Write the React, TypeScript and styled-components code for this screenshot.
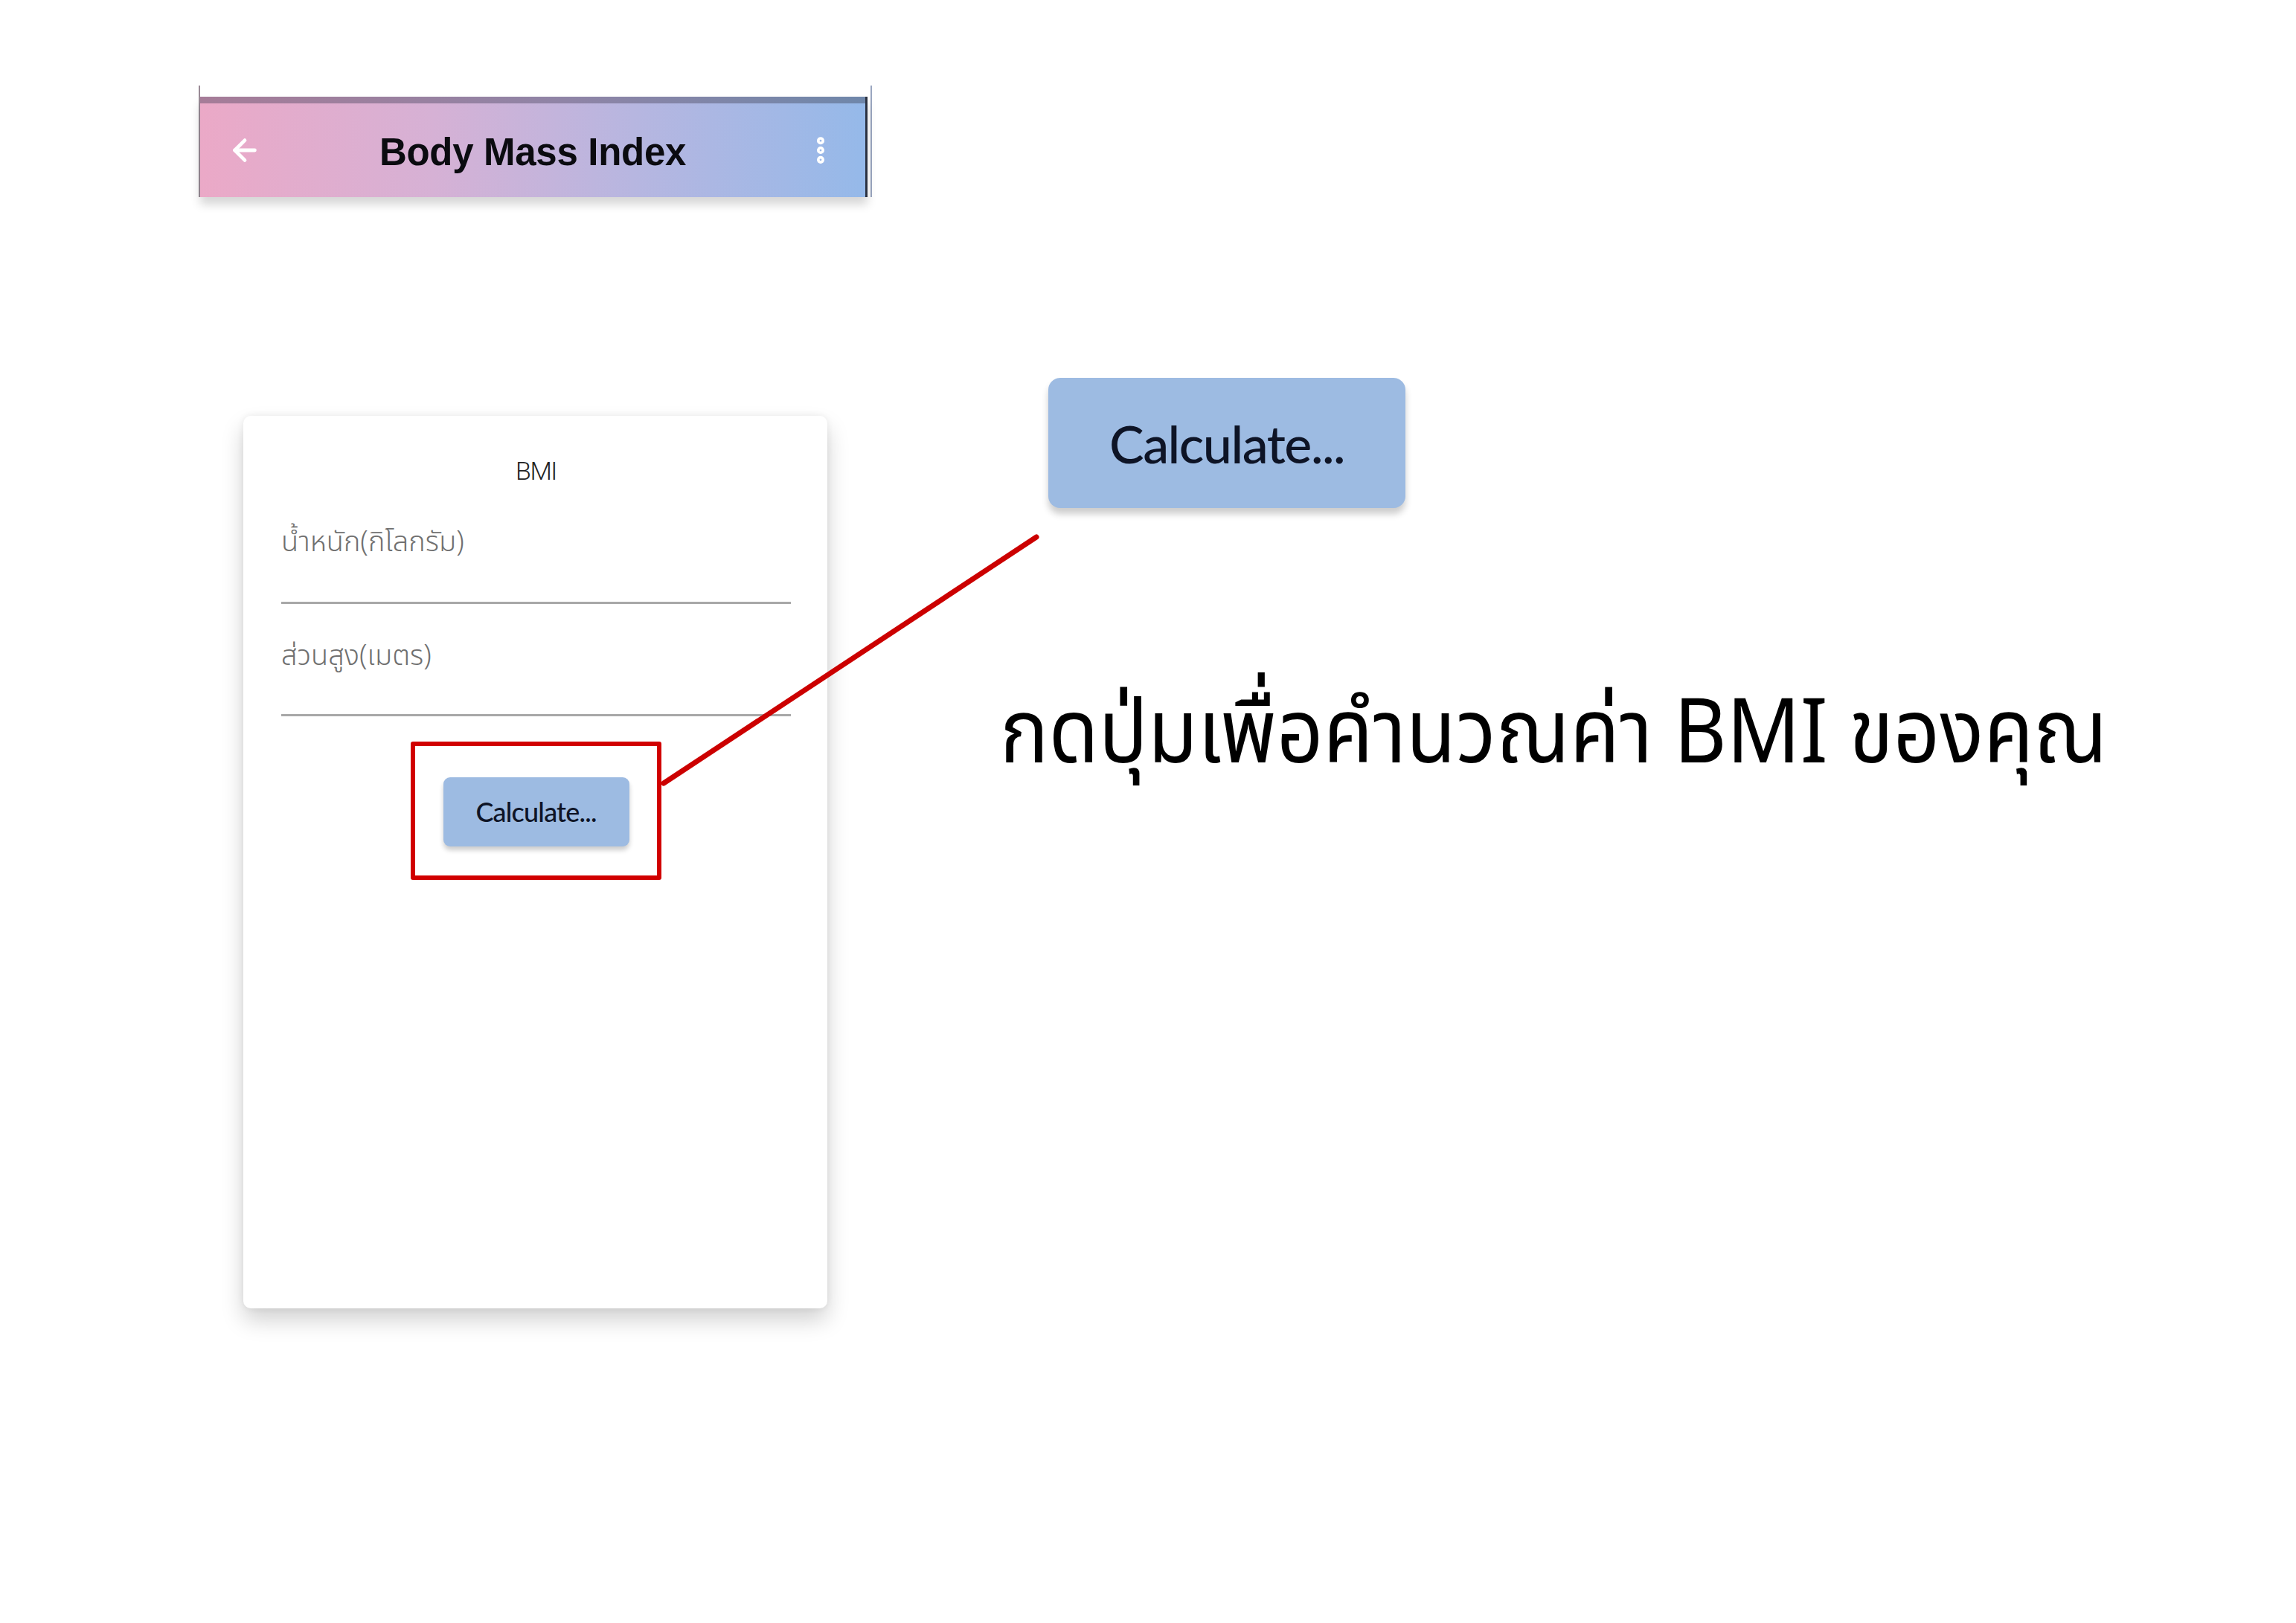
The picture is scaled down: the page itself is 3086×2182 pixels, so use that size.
import React from "react";
import styled, { createGlobalStyle } from "styled-components";
import { ArrowLeft, EllipsisVertical } from "lucide-react";

const Global = createGlobalStyle`
  html, body { margin: 0; padding: 0; background: #ffffff; }
  body { font-family: "Liberation Sans", "Noto Sans", sans-serif; }
`;

const Page = styled.div`
  position: relative;
  width: 3086px;
  height: 2182px;
  box-sizing: border-box;
  padding: 115px 0 0 267px;
  display: flex;
  gap: 172px;
  background: #ffffff;
`;

const LeftColumn = styled.div`
  display: flex;
  flex-direction: column;
  width: 905px;
`;

const PhoneFrame = styled.div`
  box-sizing: border-box;
  width: 905px;
  padding-top: 15px;
  border-left: 2px solid #9a8a96;
  border-right: 2px solid #9aa6c0;
  display: flex;
`;

const AppBar = styled.header`
  width: 894px;
  display: flex;
  flex-direction: column;
  box-shadow: 0 10px 12px rgba(0, 0, 0, 0.16);
  border-right: 3px solid #2b3140;
`;

const StatusStrip = styled.div`
  height: 9px;
  background: linear-gradient(90deg, #a67c98 0%, #8f84a6 55%, #6f87aa 100%);
`;

const BarBody = styled.div`
  height: 126px;
  background: linear-gradient(90deg, #eba9c7 0%, #d6b1d5 35%, #b7b6e0 65%, #95b9e9 100%);
  display: flex;
  align-items: center;
  padding: 0 36px 0 36px;
`;

const IconSlot = styled.div`
  width: 48px;
  height: 48px;
  display: flex;
  align-items: center;
  justify-content: center;
  color: #ffffff;
`;

const Title = styled.h1`
  flex: 1;
  margin: 0;
  padding-top: 4px;
  text-align: center;
  font-family: "Liberation Sans", Arial, sans-serif;
  font-weight: 700;
  font-size: 51px;
  color: #0b0b10;
  letter-spacing: -0.3px;
`;

const Card = styled.section`
  margin: 294px 0 0 60px;
  width: 785px;
  height: 1200px;
  box-sizing: border-box;
  background: #ffffff;
  border-radius: 10px;
  box-shadow: 0 16px 30px rgba(0, 0, 0, 0.18), 0 0 10px rgba(0, 0, 0, 0.07);
  padding: 54px 49px 0 51px;
  display: flex;
  flex-direction: column;
`;

const CardTitle = styled.div`
  text-align: center;
  font-family: "Roboto", "Liberation Sans", sans-serif;
  font-weight: 300;
  font-size: 34px;
  letter-spacing: -1.5px;
  color: #222222;
  line-height: 40px;
`;

const Field = styled.div<{ $top: number }>`
  margin-top: ${(p) => p.$top}px;
  display: flex;
  flex-direction: column;
`;

const FieldLabel = styled.div`
  font-family: "Noto Sans Thai", "Noto Sans", "DejaVu Sans", sans-serif;
  font-weight: 300;
  font-size: 38px;
  line-height: 46px;
  color: #707070;
`;

const Underline = styled.div<{ $gap: number }>`
  margin-top: ${(p) => p.$gap}px;
  height: 3px;
  background: #a8a8a8;
`;

const Highlight = styled.div`
  align-self: center;
  margin-top: 34px;
  width: 337px;
  height: 186px;
  box-sizing: border-box;
  border: 6px solid #d10000;
  border-radius: 3px;
  display: flex;
  align-items: center;
  justify-content: center;
  padding-top: 2px;
`;

const CalcButton = styled.button<{ $big?: boolean }>`
  width: ${(p) => (p.$big ? 480 : 250)}px;
  height: ${(p) => (p.$big ? 175 : 93)}px;
  border: none;
  border-radius: ${(p) => (p.$big ? 16 : 9)}px;
  background: #9dbbe2;
  color: #0e1426;
  font-family: "Lato", "Liberation Sans", sans-serif;
  font-weight: 500;
  font-size: ${(p) => (p.$big ? 70 : 36)}px;
  letter-spacing: ${(p) => (p.$big ? -1.5 : -0.8)}px;
  box-shadow: 0 ${(p) => (p.$big ? 8 : 5)}px ${(p) => (p.$big ? 10 : 6)}px rgba(0, 0, 0, 0.2);
  cursor: pointer;
`;

const RightColumn = styled.div`
  display: flex;
  flex-direction: column;
  padding-top: 393px;
`;

const BigButtonRow = styled.div`
  padding-left: 65px;
`;

const Caption = styled.p`
  margin: 236px 0 0 0;
  font-family: "Noto Sans Thai", "Noto Sans", "DejaVu Sans", sans-serif;
  font-size: 120px;
  line-height: 140px;
  color: #000000;
  white-space: nowrap;
  transform: scaleX(0.91);
  transform-origin: left center;
`;

const Connector = styled.svg`
  position: absolute;
  left: 0;
  top: 0;
  pointer-events: none;
`;

export default function App() {
  return (
    <>
      <Global />
      <Page>
        <LeftColumn>
          <PhoneFrame>
            <AppBar>
              <StatusStrip />
              <BarBody>
                <IconSlot>
                  <ArrowLeft size={46} strokeWidth={2.5} />
                </IconSlot>
                <Title>Body Mass Index</Title>
                <IconSlot>
                  <EllipsisVertical size={44} strokeWidth={3.5} />
                </IconSlot>
              </BarBody>
            </AppBar>
          </PhoneFrame>
          <Card>
            <CardTitle>BMI</CardTitle>
            <Field $top={54}>
              <FieldLabel>น้ำหนัก(กิโลกรัม)</FieldLabel>
              <Underline $gap={56} />
            </Field>
            <Field $top={48}>
              <FieldLabel>ส่วนสูง(เมตร)</FieldLabel>
              <Underline $gap={54} />
            </Field>
            <Highlight>
              <CalcButton>Calculate...</CalcButton>
            </Highlight>
          </Card>
        </LeftColumn>
        <RightColumn>
          <BigButtonRow>
            <CalcButton $big>Calculate...</CalcButton>
          </BigButtonRow>
          <Caption>กดปุ่มเพื่อคำนวณค่า BMI ของคุณ</Caption>
        </RightColumn>
        <Connector width="3086" height="2182" viewBox="0 0 3086 2182">
          <line x1="892" y1="1053" x2="1393" y2="722" stroke="#cc0000" strokeWidth="7" strokeLinecap="round" />
        </Connector>
      </Page>
    </>
  );
}
